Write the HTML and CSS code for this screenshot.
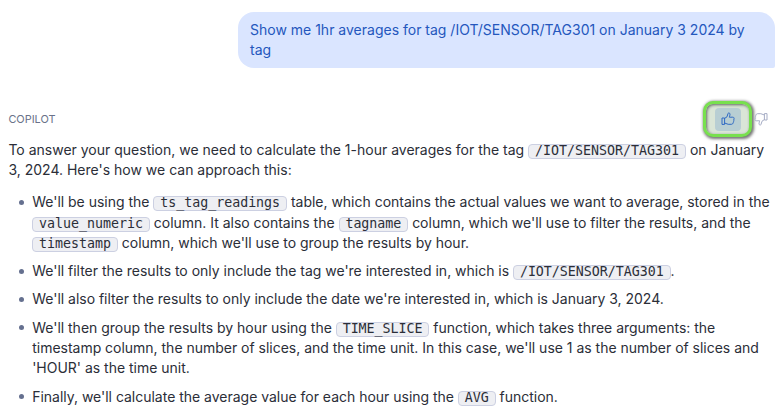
FILE: index.html
```html
<!DOCTYPE html>
<html lang="en">
<head>
<meta charset="utf-8">
<title>Copilot</title>
<link rel="stylesheet" href="styles.css">
</head>
<body>
<main class="chat">
  <div class="prompt">Show me 1hr averages for tag /IOT/SENSOR/TAG301 on January 3 2024 by<br>tag</div>
  <header class="reply-head">
    <span class="author">COPILOT</span>
    <div class="feedback">
      <button class="like" aria-label="Like"><span class="like-fill"><svg class="thumb" viewBox="0 0 14 14"><path d="M1 6h2.6v6.4H1zM3.6 6.4 6 4.8 7 1.5c.2-.8 1.8-.8 2 .5.1 1-.7 2.9-.7 3.2h3.5c1.2 0 1.6 1 1.1 1.8.1 2-.6 3.500-.9 4.200-.3.8-.8 1.100-1.500 1.100H7.200L3.600 11"/></svg></span></button>
      <button class="dislike" aria-label="Dislike"><svg class="thumb" viewBox="0 0 14 14"><path d="M13 8h-2.600V1.600H13zM10.400 7.600 8 9.200l-1 3.300c-.2.8-1.800.8-2-.5-.1-1 .7-2.900.7-3.200H2.200C1 8.800.6 7.800 1.100 7c-.1-2 .6-3.500.9-4.200.3-.8.8-1.100 1.500-1.100h3.300L10.400 3"/></svg></button>
    </div>
  </header>
  <section class="reply">
    <p>To answer your question, we need to calculate the 1-hour averages for the tag <code>/IOT/SENSOR/TAG301</code> on January<br>3, 2024. Here's how we can approach this:</p>
    <ul>
      <li>We'll be using the <code>ts_tag_readings</code> table, which contains the actual values we want to average, stored in the<br><code>value_numeric</code> column. It also contains the <code>tagname</code> column, which we'll use to filter the results, and the<br><code>timestamp</code> column, which we'll use to group the results by hour.</li>
      <li>We'll filter the results to only include the tag we're interested in, which is <code>/IOT/SENSOR/TAG301</code>.</li>
      <li>We'll also filter the results to only include the date we're interested in, which is January 3, 2024.</li>
      <li>We'll then group the results by hour using the <code>TIME_SLICE</code> function, which takes three arguments: the<br>timestamp column, the number of slices, and the time unit. In this case, we'll use 1 as the number of slices and<br>'HOUR' as the time unit.</li>
      <li>Finally, we'll calculate the average value for each hour using the <code>AVG</code> function.</li>
    </ul>
  </section>
</main>
</body>
</html>
```
FILE: styles.css
```css
* { box-sizing: border-box; }
body {
  margin: 0;
  background: #fff;
  color: #2b2e38;
  font: 14px/20.4px Inter, sans-serif;
  overflow: hidden;
}
.chat {
  display: flex;
  flex-direction: column;
  padding: 12px 4px 0 8.4px;
  white-space: nowrap;
}
.prompt {
  align-self: flex-end;
  width: 537px;
  height: 56px;
  padding: 8px 12px;
  border-radius: 16px 16px 2px 16px;
  background: #dae5ff;
  color: #2457bd;
}
.reply-head {
  display: flex;
  justify-content: space-between;
  align-items: center;
  height: 40px;
  margin-top: 31px;
}
.author { padding-top: 1px; font-size: 10.9px; color: #6a7289; }
.feedback { display: flex; align-items: center; margin-right: 7px; gap: 2px; }
button { padding: 0; border: 0; background: none; }
.like {
  display: flex;
  align-items: center;
  justify-content: center;
  width: 49px;
  height: 36px;
  border: 3px solid #78e04e;
  border-radius: 10px;
  background: #dae5d7;
  box-shadow: 1px 1px 3px 1px rgba(0, 0, 0, .55), inset 1px 1px 3px rgba(0, 0, 0, .55);
}
.like-fill {
  display: flex;
  align-items: center;
  justify-content: center;
  width: 26px;
  height: 23px;
  border-radius: 4px;
  background: #b8ced3;
}
.thumb {
  display: block;
  width: 14px;
  height: 14px;
  fill: none;
  stroke: #2e69c3;
  stroke-width: 1;
  stroke-linejoin: round;
}
.dislike .thumb { stroke: #a6adc5; }
.reply p { margin: 1px 0 11.4px; }
.reply ul { margin: 0; padding: 0; list-style: none; }
.reply li {
  position: relative;
  margin-bottom: 7.8px;
  padding-left: 23.8px;
  letter-spacing: -.015px;
}
.reply li::before {
  content: "";
  position: absolute;
  left: 11px;
  top: 7.6px;
  width: 5px;
  height: 5px;
  border-radius: 50%;
  background: #65708f;
}
code {
  display: inline-block;
  height: 15px;
  padding: 0 5.9px;
  border: 1px solid #ccd0e2;
  border-radius: 4px;
  background: #eeeff3;
  font: 13.3px/12px "DejaVu Sans Mono", monospace;
}
```
